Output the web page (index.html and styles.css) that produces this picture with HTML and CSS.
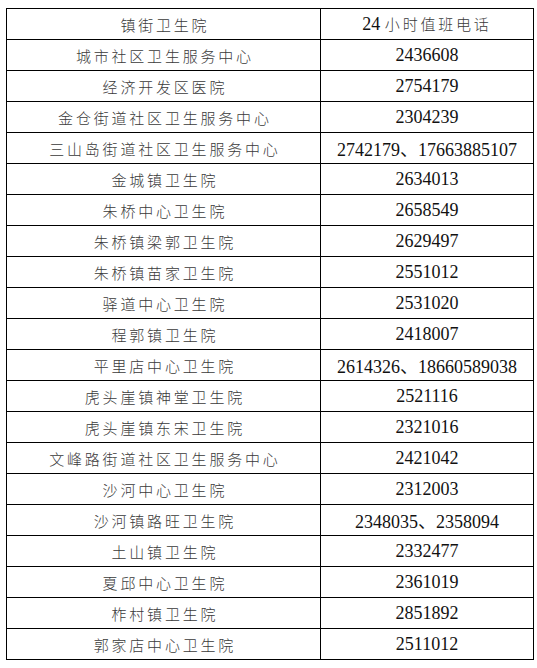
FILE: index.html
```html
<!DOCTYPE html>
<html lang="zh">
<head>
<meta charset="utf-8">
<link rel="stylesheet" href="styles.css">
</head>
<body>
<div class="wrap">
<table class="tbl">
<tr><td class="name">镇街卫生院</td><td class="num">24 <span class="cn">小时值班电话</span></td></tr>
<tr><td class="name">城市社区卫生服务中心</td><td class="num">2436608</td></tr>
<tr><td class="name">经济开发区医院</td><td class="num">2754179</td></tr>
<tr><td class="name">金仓街道社区卫生服务中心</td><td class="num">2304239</td></tr>
<tr><td class="name">三山岛街道社区卫生服务中心</td><td class="num">2742179、17663885107</td></tr>
<tr><td class="name">金城镇卫生院</td><td class="num">2634013</td></tr>
<tr><td class="name">朱桥中心卫生院</td><td class="num">2658549</td></tr>
<tr><td class="name">朱桥镇梁郭卫生院</td><td class="num">2629497</td></tr>
<tr><td class="name">朱桥镇苗家卫生院</td><td class="num">2551012</td></tr>
<tr><td class="name">驿道中心卫生院</td><td class="num">2531020</td></tr>
<tr><td class="name">程郭镇卫生院</td><td class="num">2418007</td></tr>
<tr><td class="name">平里店中心卫生院</td><td class="num">2614326、18660589038</td></tr>
<tr><td class="name">虎头崖镇神堂卫生院</td><td class="num">2521116</td></tr>
<tr><td class="name">虎头崖镇东宋卫生院</td><td class="num">2321016</td></tr>
<tr><td class="name">文峰路街道社区卫生服务中心</td><td class="num">2421042</td></tr>
<tr><td class="name">沙河中心卫生院</td><td class="num">2312003</td></tr>
<tr><td class="name">沙河镇路旺卫生院</td><td class="num">2348035、2358094</td></tr>
<tr><td class="name">土山镇卫生院</td><td class="num">2332477</td></tr>
<tr><td class="name">夏邱中心卫生院</td><td class="num">2361019</td></tr>
<tr><td class="name">柞村镇卫生院</td><td class="num">2851892</td></tr>
<tr><td class="name">郭家店中心卫生院</td><td class="num">2511012</td></tr>
</table>
</div>
</body>
</html>
```
FILE: styles.css
```css
html, body {
  margin: 0;
  padding: 0;
  background: #fff;
}
.wrap {
  padding: 8px 0 0 6px;
}
.tbl {
  border-collapse: collapse;
  width: 528px;
  table-layout: fixed;
}
.tbl td {
  border: 1px solid #000;
  height: 31px;
  padding: 0;
  text-align: center;
  vertical-align: middle;
  box-sizing: border-box;
  white-space: nowrap;
}
.tbl td.name {
  width: 314px;
  font-family: "Noto Sans CJK SC", sans-serif;
  font-weight: 300;
  font-size: 15px;
  letter-spacing: 2.8px;
  text-indent: 2.8px;
  color: #3a3a3a;
}
.tbl td.num {
  font-family: "Liberation Serif", "Noto Sans CJK SC", serif;
  font-size: 18px;
  color: #111;
}
.cn {
  font-family: "Noto Sans CJK SC", sans-serif;
  font-weight: 300;
  font-size: 15px;
  letter-spacing: 2.8px;
  color: #3a3a3a;
}
```
